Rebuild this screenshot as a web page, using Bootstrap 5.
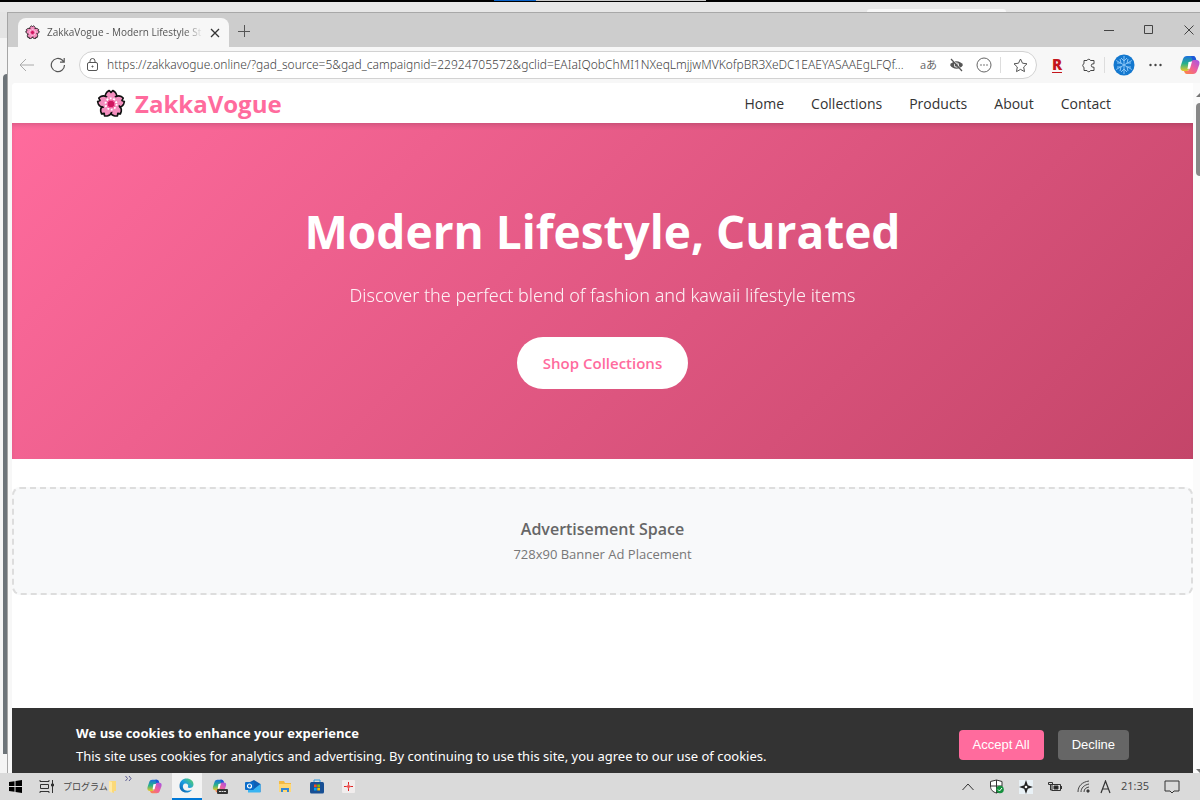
<!DOCTYPE html>
<html lang="en">
<head>
<meta charset="utf-8">
<meta name="viewport" content="width=device-width, initial-scale=1">
<title>ZakkaVogue - Modern Lifestyle Store</title>
<link href="https://cdn.jsdelivr.net/npm/bootstrap@5.3.0/dist/css/bootstrap.min.css" rel="stylesheet">
<style>
:root { --pink: #ff6b9d; --ink: #333; }
body { font-family: "Open Sans", "Noto Sans CJK JP", sans-serif; background: #e7e7e7; color: var(--ink); }
button { background: none; border: 0; padding: 0; color: inherit; }
svg { display: block; flex: none; }
.fill { min-height: 0; }
.top-edge { height: 2px; background: #000; }
.top-edge .blue { width: 42px; margin-left: 494px; background: #0a63c9; height: 1px; }
.top-edge .pale { width: 170px; background: #c8c8c8; height: 1px; }
.back-window { height: 10px; padding-left: 867px; }
.back-window .back-tab { width: 139px; height: 3px; background: #f8f8f8; border-radius: 3px 3px 0 0; }
.back-edge { width: 7px; padding: 62px 0 19px 3px; background: linear-gradient(#e4e4e4 26px, #f4f4f4 26px); }
.back-edge .bar { height: 100%; background: #6c7378; border-radius: 4px 0 0 0; }
.browser { border-left: 1px solid #a5a5a5; border-top: 1px solid #a8a8a8; background: #f7f7f7; min-width: 0; }
.tab-strip { background: #cdcdcd; height: 34px; padding-left: 10px; }
.page-tab { background: #f7f7f7; width: 211px; height: 29px; border-radius: 8px 8px 0 0; padding: 0 9px 0 7px; font-size: 10px; color: #555; gap: 7px; }
.page-tab .tab-title { white-space: nowrap; flex: 1; -webkit-mask-image: linear-gradient(90deg, #000 88%, transparent); mask-image: linear-gradient(90deg, #000 88%, transparent); }
.window-keys { gap: 30px; padding-right: 6px; }
.tool-bar { height: 36px; padding-left: 11px; color: #555; }
.address { width: 958px; height: 28px; border: 1px solid #d2d2d2; border-radius: 14px; background: #fff; padding: 0 8px 0 6px; margin-right: 15px; flex: none; }
.address input { border: 0; outline: 0; background: none; font-family: "Noto Sans", sans-serif; font-size: 12px; font-weight: 300; color: #444; min-width: 0; text-overflow: ellipsis; padding: 0; margin: 0 8px; }
.address .translate { font-size: 11px; color: #666; }
.divider { width: 1px; height: 16px; background: #ddd; }
.rakuten { color: #c4161c; font: 800 15px/12px "Open Sans", sans-serif; border-bottom: 1px solid #c4161c; padding-bottom: 2px; margin-right: 19px; }
.profile { margin: 0 14px 0 8px; }
.page-menu { margin-right: 18px; }
.side-tools { width: 148px; overflow: hidden; }
.view { margin-left: 4px; background: #fff; border-radius: 4px 0 0 0; min-width: 0; overflow: hidden; }
.site-nav { height: 40px; padding: 0 82px 0 84px; background: #fff; }
.site-nav .navbar-brand { color: var(--pink); font-size: 24px; font-weight: 700; gap: 9px; padding: 2px 0 0; margin: 0; line-height: 32px; }
.site-nav .menu { gap: 27px; font-size: 14px; }
.site-nav .nav-link { color: var(--ink); padding: 0; }
.hero { background: linear-gradient(135deg, #ff6b9d 0%, #c44569 100%); height: 336px; color: #fff; box-shadow: inset 0 4px 6px -3px rgba(0,0,0,.2); padding-top: 74px; }
.hero h1 { font-size: 46px; font-weight: 700; line-height: 68px; margin-bottom: 16px; }
.hero p { font-family: "Noto Sans", sans-serif; font-size: 18px; line-height: 28px; font-weight: 300; opacity: .92; margin-bottom: 28px; }
.btn-shop { background: #fff; color: var(--pink); border-radius: 26px; padding: 14px 26px; font-size: 15px; line-height: 24px; font-weight: 600; }
.ad-space { margin-top: 28px; height: 108px; border: 2px dashed #ddd; border-radius: 8px; background: #f8f9fa; color: #666; padding-top: 2px; }
.ad-space .ad-title { font-size: 16px; line-height: 24px; font-weight: 600; }
.ad-space .ad-text { font-size: 13px; line-height: 26px; color: #777; }
.cookie { background: #333; color: #fff; height: 65px; padding: 8px 64px 0; font-size: 13px; line-height: 23px; }
.cookie .cookie-text { font-family: "Noto Sans", sans-serif; }
.cookie .btn { font: 13px/20px "Liberation Sans", sans-serif; color: #fff; border-radius: 4px; padding: 5px 14px; border: 0; height: 30px; }
.cookie .btn-accept { background: var(--pink); }
.cookie .btn-decline { background: #666; }
.cookie .choices { gap: 14px; }
.scroll { width: 7px; background: #fbfbfb; padding: 10px 0 0 3px; overflow: hidden; }
.scroll .arrow { width: 8px; height: 4px; background: #777; clip-path: polygon(50% 0, 100% 100%, 0 100%); }
.scroll .arrow.down { transform: rotate(180deg); }
.scroll .thumb { width: 8px; height: 73px; border-radius: 4px 0 0 4px; background: #888; margin-top: 6px; }
.task-bar { height: 27px; background: #dadada; font-size: 11px; color: #444; padding: 0 20px 0 8px; }
.task-bar .group-name { font-size: 9px; }
.task-bar .apps { gap: 17px; margin-left: 15px; }
.task-bar .active-app { width: 30px; height: 27px; background: #f3f3f3; border-bottom: 2px solid #0078d7; margin: 0 -7px; }
.task-bar .tray { gap: 15px; }
.task-bar .ime { margin: 0 -5px; }
</style>
</head>
<body class="d-flex flex-column vh-100 overflow-hidden">
<svg width="0" height="0" class="position-absolute">
  <defs>
    <linearGradient id="g-co-a" x1="0" y1="0" x2="0" y2="1"><stop offset="0" stop-color="#1b6fe0"/><stop offset=".5" stop-color="#27b18a"/><stop offset="1" stop-color="#e8c928"/></linearGradient>
    <linearGradient id="g-co-b" x1="1" y1="0" x2="0" y2="1"><stop offset="0" stop-color="#a253e8"/><stop offset=".5" stop-color="#ee5f9c"/><stop offset="1" stop-color="#ff8a3c"/></linearGradient>
    <linearGradient id="g-edge" x1="0" y1="1" x2="1" y2="0"><stop offset="0" stop-color="#0c59a4"/><stop offset=".5" stop-color="#1b9de2"/><stop offset="1" stop-color="#5fd65f"/></linearGradient>
    <symbol id="flower" viewBox="0 0 30 30">
      <g fill="#f48fbf" stroke="#111" stroke-width="1.6" stroke-linejoin="round">
        <path id="petal" d="M15 15 C9 11 8 6 11 3 L13.200 1.500 L15 3.500 L16.800 1.500 L19 3 C22 6 21 11 15 15Z"/>
        <use href="#petal" transform="rotate(72 15 15)"/><use href="#petal" transform="rotate(144 15 15)"/><use href="#petal" transform="rotate(216 15 15)"/><use href="#petal" transform="rotate(288 15 15)"/>
      </g>
      <circle cx="15" cy="15" r="8" fill="#f48fbf"/>
      <circle cx="15" cy="15" r="5.500" fill="none" stroke="#fff" stroke-width="2" stroke-dasharray="1.700 1.750"/>
      <circle cx="15" cy="15" r="3.300" fill="#cf1760"/><circle cx="15" cy="15" r="4" fill="none" stroke="#f35b9b"/>
    </symbol>
    <symbol id="copilot" viewBox="0 0 20 20">
      <path fill="url(#g-co-a)" d="M7 1h6c2 0 2.500 1.500 3 3l.5 2h-3c-2 0-2.600 1-3 2.500L9 14c-.5 1.500-1 2-3 2H4c-3 0-4-2-3.300-5L3 4c.7-2 2-3 4-3Z"/>
      <path fill="#1f56d8" d="M11 1h2c2 0 2.500 1.500 3 3l.5 2h-3c-1 0-1-.5-1.300-2Z"/>
      <path fill="url(#g-co-b)" d="M13 19H7c-2 0-2.500-1.500-3-3h3c1.500 0 2-1 2.500-2.500L11 8c.5-1.500 1-3 3-3h2c3 0 4 1.500 3.300 4.500L17 16c-.7 2-2 3-4 3Z"/>
      <path fill="#fff" d="m8.500 7 3.500-.5-2 7-2.500.5Z"/>
    </symbol>
  </defs>
</svg>

<div class="top-edge d-flex"><div class="blue"></div><div class="pale"></div></div>
<div class="back-window d-flex align-items-end"><div class="back-tab"></div></div>

<div class="fill d-flex flex-grow-1">
  <div class="back-edge"><div class="bar"></div></div>
  <div class="browser d-flex flex-column flex-grow-1">
    <div class="tab-strip d-flex align-items-end">
      <div class="page-tab d-flex align-items-center">
        <svg width="15" height="15"><use href="#flower"/></svg>
        <span class="tab-title">ZakkaVogue - Modern Lifestyle St</span>
        <button aria-label="Close tab"><svg width="10" height="10" viewBox="0 0 10 10" stroke="#333" stroke-width="1.300"><path d="m1 1 8 8M9 1 1 9"/></svg></button>
      </div>
      <button class="ms-2 mb-2" aria-label="New tab"><svg width="14" height="16" viewBox="0 0 14 16" stroke="#555"><path d="M1 8.500h12M7.500 2v12"/></svg></button>
      <div class="window-keys d-flex align-items-center ms-auto h-100">
        <button aria-label="Minimize"><svg width="10" height="10" stroke="#444"><path d="M0 5.500h10"/></svg></button>
        <button aria-label="Maximize"><svg width="10" height="10" fill="none" stroke="#444"><path d="M.5.500h8v8h-8z"/></svg></button>
        <button aria-label="Close"><svg width="10" height="10" stroke="#444"><path d="m.5.500 9 9M9.500.500l-9 9"/></svg></button>
      </div>
    </div>

    <div class="tool-bar d-flex align-items-center">
      <button aria-label="Back"><svg width="15" height="14" viewBox="0 0 15 14" fill="none" stroke="#aaa"><path d="M15 7H1M7 1 1 7l6 6"/></svg></button>
      <button class="ms-3" aria-label="Reload"><svg width="16" height="16" viewBox="0 0 16 16" fill="none" stroke="#555" stroke-width="1.200"><path d="M14.500 8A6.600 6.600 0 1 1 12.500 3.300L14 5M14.200 1v4.200H10"/></svg></button>
      <div class="address d-flex align-items-center ms-auto">
        <svg width="13" height="14" viewBox="0 0 13 14" fill="none" stroke="#555"><rect x="1.500" y="4.500" width="10" height="8" rx="1.500"/><path d="M4 4.500V3a2.500 2.500 0 0 1 5 0v1.500"/><circle cx="6.500" cy="8.500" r=".6" fill="#555"/></svg>
        <input class="flex-grow-1" type="text" aria-label="Address" value="https://zakkavogue.online/?gad_source=5&amp;gad_campaignid=22924705572&amp;gclid=EAIaIQobChMI1NXeqLmjjwMVKofpBR3XeDC1EAEYASAAEgLFQf...">
        <button class="translate" aria-label="Translate">aあ</button>
        <button class="ms-2 ps-1" aria-label="Tracking hidden"><svg width="15" height="14" viewBox="0 0 15 14"><path d="M1 7c3-5 10-5 13 0-3 5-10 5-13 0Z" fill="#555"/><circle cx="7.500" cy="7" r="2.500" fill="#fff"/><circle cx="7.500" cy="7" r="1.800" fill="#555"/><path d="m3 1 11 12" stroke="#fff"/><path d="m2 1 11 12" stroke="#555" stroke-width="1.200"/></svg></button>
        <button class="ms-2 ps-1" aria-label="More page options"><svg width="16" height="16" viewBox="0 0 16 16" fill="#666"><circle cx="8" cy="8" r="7" fill="none" stroke="#666"/><circle cx="5" cy="8" r=".8"/><circle cx="8" cy="8" r=".8"/><circle cx="11" cy="8" r=".8"/></svg></button>
        <span class="divider ms-2"></span>
        <button class="ms-2 ps-1" aria-label="Favorite"><svg width="15" height="15" viewBox="0 0 15 15" fill="none" stroke="#555" stroke-linejoin="round"><path d="m7.500 1 2 4.200 4.500.6-3.300 3.200.8 4.600-4-2.200-4 2.200.8-4.600L1 5.800l4.500-.6Z"/></svg></button>
      </div>
      <div class="side-tools d-flex align-items-center">
        <button class="rakuten" aria-label="Rakuten">R</button>
        <button class="me-2" aria-label="Extensions"><svg width="15" height="15" viewBox="0 0 15 15" fill="none" stroke="#444"><path d="M3 2.500h3a1.800 1.600 0 0 1 3.500 0H13v3.300h-1a1.700 1.700 0 0 0 0 3.400h1v3.300H9.500a1.800 1.600 0 0 1-3.500 0H3V9.300a1.900 1.900 0 0 1 0-3.600Z"/></svg></button>
        <span class="divider"></span>
        <button class="profile" aria-label="Profile"><svg width="22" height="22" viewBox="0 0 22 22"><circle cx="11" cy="11" r="10.500" fill="#1478cf"/><g stroke="#8ac6f7" fill="none"><path d="M11 2v18M3.200 6.500l15.600 9M3.200 15.500l15.600-9M8 4l3 3 3-3M8 18l3-3 3 3M4 9l4 0-1-4M18 13h-4l1 4M4 13l4 0-1 4M18 9h-4l1-4"/></g></svg></button>
        <button class="page-menu" aria-label="Menu"><svg width="13" height="4" fill="#444"><circle cx="1.500" cy="2" r="1.200"/><circle cx="6.500" cy="2" r="1.200"/><circle cx="11.500" cy="2" r="1.200"/></svg></button>
        <button aria-label="Copilot"><svg width="20" height="20"><use href="#copilot"/></svg></button>
      </div>
    </div>

    <div class="fill d-flex flex-grow-1">
      <div class="view d-flex flex-column flex-grow-1">
        <nav class="site-nav d-flex align-items-center justify-content-between">
          <a class="navbar-brand d-flex align-items-center" href="#"><svg width="30" height="30"><use href="#flower"/></svg>ZakkaVogue</a>
          <div class="nav menu">
            <a class="nav-link" href="#">Home</a>
            <a class="nav-link" href="#">Collections</a>
            <a class="nav-link" href="#">Products</a>
            <a class="nav-link" href="#">About</a>
            <a class="nav-link" href="#">Contact</a>
          </div>
        </nav>
        <section class="hero text-center">
          <h1>Modern Lifestyle, Curated</h1>
          <p>Discover the perfect blend of fashion and kawaii lifestyle items</p>
          <button class="btn-shop">Shop Collections</button>
        </section>
        <section class="ad-space d-flex flex-column align-items-center justify-content-center">
          <div class="ad-title">Advertisement Space</div>
          <div class="ad-text">728x90 Banner Ad Placement</div>
        </section>
        <div class="cookie mt-auto d-flex align-items-center justify-content-between">
          <div><strong class="d-block">We use cookies to enhance your experience</strong><span class="cookie-text">This site uses cookies for analytics and advertising. By continuing to use this site, you agree to our use of cookies.</span></div>
          <div class="choices d-flex"><button class="btn btn-accept">Accept All</button><button class="btn btn-decline">Decline</button></div>
        </div>
      </div>
      <div class="scroll d-flex flex-column"><div class="arrow"></div><div class="thumb"></div><div class="arrow down mt-auto"></div></div>
    </div>
  </div>
</div>

<footer class="task-bar d-flex align-items-center">
  <button aria-label="Start"><svg width="15" height="15" viewBox="0 0 15 15"><path d="M1 3l5.500-.8V7H1ZM7.500 2 14 1v6H7.500ZM1 8h5.500v4.800L1 12ZM7.500 8H14v6l-6.500-1Z"/></svg></button>
  <button class="ms-3" aria-label="Task view"><svg width="16" height="15" viewBox="0 0 16 15" fill="none" stroke="#333"><path d="M1 1v1.500h9V1M1 14v-1.500h9V14M1.500 5.500h8v4h-8zM13.500 1v13"/><path d="M12.500 5h2v2h-2z" fill="#333"/></svg></button>
  <span class="group-name ms-2">プログラム</span>
  <svg width="9" height="14" viewBox="0 0 9 14"><path d="M1 1h7v10H6v2L1 11Z" fill="#fbd979"/><path d="M1 1l3 1v11l-3-2Z" fill="#ffe9a6"/></svg>
  <svg class="ms-2 mb-3" width="7" height="5" fill="none" stroke="#5a5a90"><path d="m.5 0 2 2.500-2 2.500M4 0l2 2.500L4 5"/></svg>
  <div class="apps d-flex align-items-center">
    <button aria-label="Copilot"><svg width="15" height="15"><use href="#copilot"/></svg></button>
    <button class="active-app d-flex align-items-center justify-content-center" aria-label="Edge"><svg width="15" height="15" viewBox="0 0 15 15"><path d="M.5 8C.5 3 4 .5 7.500.500c4 0 7 2.500 7 6 0 2.500-2 3.500-4 3.500-1.500 0-2-.5-1.500-1.200C9.700 7 8.500 5.500 6.500 5.500c-2 0-3 2-2.500 4 .7 3 4 4 7.500 2.800l1.800-.8c-1.800 2.500-4 3-6 3C3.500 14.500.5 12 .5 8Z" fill="url(#g-edge)"/></svg></button>
    <button aria-label="Microsoft 365 Copilot"><svg width="16" height="16" viewBox="0 0 16 16"><use href="#copilot" width="15" height="14"/><rect x="5" y="10" width="11" height="5" rx="1" fill="#333"/><path d="M7 12.500h7" stroke="#ddd" stroke-dasharray="2 .5"/></svg></button>
    <button aria-label="Outlook"><svg width="16" height="15" viewBox="0 0 16 15"><path d="m3 4 6-3 6.500 4v8H3Z" fill="#0f5fb5"/><path d="m3 7 6 3 6.500-5V13.500H3Z" fill="#38b4f2"/><rect x="0" y="3" width="9" height="8" rx="1" fill="#0a6cca"/><circle cx="4.500" cy="7" r="2" fill="none" stroke="#fff" stroke-width="1.200"/></svg></button>
    <button aria-label="Explorer"><svg width="14" height="13" viewBox="0 0 14 13"><path d="M1 1h5l1 2h6v9H1Z" fill="#f3b941"/><path d="M1 4h12v8H1Z" fill="#ffd875"/><path d="M3 12V8h8v4H9v-2H5v2Z" fill="#3587d4"/></svg></button>
    <button aria-label="Store"><svg width="16" height="15" viewBox="0 0 16 15"><path d="M5 3V1h6v2" fill="none" stroke="#2b9ae0"/><rect x="1" y="3" width="14" height="11.500" rx="1.500" fill="#174f94"/><path d="M5 5.500h2.700v2.700H5z" fill="#f25022"/><path d="M8.300 5.500H11v2.700H8.300z" fill="#7fba00"/><path d="M5 8.800h2.700v2.700H5z" fill="#00a4ef"/><path d="M8.300 8.800H11v2.700H8.300z" fill="#ffb900"/></svg></button>
    <button aria-label="Target app"><svg width="13" height="13" viewBox="0 0 13 13"><rect width="13" height="13" rx="1" fill="#f1eded"/><path d="M6.500 2v9M2 6.500h9" stroke="#d22"/><path d="m6.500 3.500 1 2 2 1-2 1-1 2-1-2-2-1 2-1Z" fill="#e55"/></svg></button>
  </div>
  <div class="tray d-flex align-items-center ms-auto">
    <button aria-label="Hidden icons"><svg width="12" height="8" fill="none" stroke="#333"><path d="m.5 7 5.500-6 5.500 6"/></svg></button>
    <svg width="15" height="15" viewBox="0 0 15 15"><path d="M7.500 1 13 2.500V7c0 4-3 6-5.500 7C4 13 1.500 11 1.500 7V2.500Z" fill="#fff" stroke="#333"/><path d="M7.500 1v13M2 7h11" stroke="#333"/><circle cx="11" cy="10.500" r="3.800" fill="#15903e"/><path d="m9 10.500 1.500 1.500 2.500-3" fill="none" stroke="#fff"/></svg>
    <svg width="14" height="14" viewBox="0 0 14 14"><rect width="14" height="14" fill="#e9f1f6"/><path d="m7 0 1.800 5.200L14 7 8.800 8.800 7 14 5.200 8.800 0 7l5.200-1.800Z" fill="#222"/><circle cx="7" cy="7" r="1.300" fill="#fff"/></svg>
    <svg width="14" height="11" viewBox="0 0 14 11" fill="none" stroke="#333"><path d="M4 3.500h8.500v6H4zM13.500 5v3M.5 1.500h4v2h-4zM2.500 4v5H4"/><path d="M6 5h4v3H6z" fill="#222"/></svg>
    <svg width="13" height="13" viewBox="0 0 13 13" fill="none" stroke="#444"><path d="M1 12C1 6 5 2 12 1M4 12c0-4 3-7 8-8M7 12c0-3 2-4.500 5-5"/><circle cx="11" cy="11" r="1.200" fill="#222"/></svg>
    <svg class="ime" width="11" height="14" viewBox="0 0 11 14" fill="none" stroke="#333" stroke-width="1.200"><path d="M1 13 5.500 1 10 13M2.800 9h5.400"/></svg>
    <span>21:35</span>
    <button aria-label="Notifications"><svg width="16" height="14" viewBox="0 0 16 14" fill="none" stroke="#333"><path d="M1 1h14v10h-5l-2 2-2-2H1Z"/></svg></button>
  </div>
</footer>
<script src="https://cdn.jsdelivr.net/npm/bootstrap@5.3.0/dist/js/bootstrap.bundle.min.js"></script>
</body>
</html>
